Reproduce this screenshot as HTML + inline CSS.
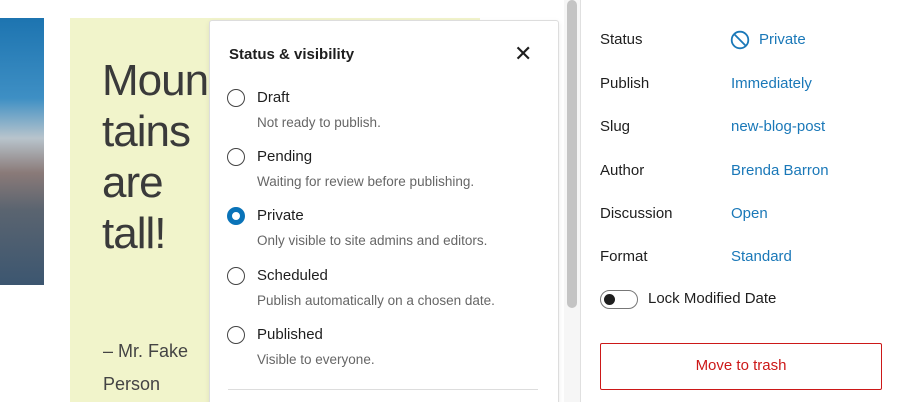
<!DOCTYPE html>
<html><head><style>
html,body{margin:0;width:900px;height:402px;overflow:hidden}
body{background:#fff;font-family:"Liberation Sans",sans-serif;position:relative}
.abs{position:absolute}
.img{left:0;top:18px;width:44px;height:267px;background:linear-gradient(180deg,#1d74b0 0%,#3e8fc4 30%,#b8c4cc 45%,#8a7a78 58%,#5a6470 72%,#3c5670 100%)}
.yel{left:70px;top:18px;width:410px;height:384px;background:#f1f4cb}
.big{left:102px;top:55px;font-size:44px;line-height:51px;color:#3a3a3a;letter-spacing:-1px}
.q{left:103px;font-size:18px;color:#444}
.pop{left:209px;top:20px;width:348px;height:390px;background:#fff;border:1px solid #ddd;border-radius:3px;box-shadow:0 2px 6px rgba(0,0,0,.08)}
.t{left:19px;top:25px;font-size:15px;font-weight:bold;color:#1e1e1e}
.x{left:304px;top:20px;font-size:22px;color:#1e1e1e}
.r{left:17px;width:18px;height:18px;border:1.5px solid #444;border-radius:50%;box-sizing:border-box}
.r.on{border:5.5px solid #0a73b8}
.l{left:47px;font-size:15px;color:#1e1e1e}
.d{left:47px;font-size:13.5px;color:#666}
.sep{left:18px;top:368px;width:310px;height:1px;background:#ddd}
.sb{left:567px;top:0;width:10px;height:308px;background:#c4c4c4;border-radius:5px}
.sbt{left:564px;top:0;width:16px;height:402px;background:#f6f6f6}
.bd{left:580px;top:0;width:1px;height:402px;background:#e0e0e0}
.k{left:600px;font-size:15px;color:#1e1e1e}
.v{left:731px;font-size:15px;color:#1a78b8}
.tg{left:600px;top:290px;width:38px;height:19px;border:1px solid #777;border-radius:10px;box-sizing:border-box}
.tg:after{content:"";position:absolute;left:3px;top:3px;width:11px;height:11px;border-radius:50%;background:#1e1e1e}
.btn{left:600px;top:343px;width:282px;height:47px;border:1.5px solid #cc1818;box-sizing:border-box;border-radius:2px;color:#cc1818;font-size:15px;text-align:center;line-height:44px}
</style></head><body>
<div class="abs img"></div>
<div class="abs yel"></div>
<div class="abs big">Moun<br>tains<br>are<br>tall!</div>
<div class="abs q" style="top:341px">– Mr. Fake</div>
<div class="abs q" style="top:374px">Person</div>
<div class="abs sbt"></div><div class="abs sb"></div><div class="abs bd"></div>
<div class="abs pop">
<div class="abs t">Status &amp; visibility</div>
<div class="abs x">✕</div>
<div class="abs r" style="top:68px"></div><div class="abs l" style="top:68px">Draft</div><div class="abs d" style="top:94px">Not ready to publish.</div>
<div class="abs r" style="top:127px"></div><div class="abs l" style="top:127px">Pending</div><div class="abs d" style="top:153px">Waiting for review before publishing.</div>
<div class="abs r on" style="top:186px"></div><div class="abs l" style="top:186px">Private</div><div class="abs d" style="top:212px">Only visible to site admins and editors.</div>
<div class="abs r" style="top:246px"></div><div class="abs l" style="top:246px">Scheduled</div><div class="abs d" style="top:272px">Publish automatically on a chosen date.</div>
<div class="abs r" style="top:305px"></div><div class="abs l" style="top:305px">Published</div><div class="abs d" style="top:331px">Visible to everyone.</div>
<div class="abs sep"></div>
</div>
<div class="abs k" style="top:31px">Status</div>
<svg class="abs" style="left:730px;top:30px" width="20" height="20" viewBox="0 0 20 20"><circle cx="10" cy="10" r="8.3" fill="none" stroke="#1a78b8" stroke-width="1.8"/><line x1="4.3" y1="4.3" x2="15.7" y2="15.7" stroke="#1a78b8" stroke-width="1.8"/></svg>
<div class="abs v" style="top:31px;left:759px">Private</div>
<div class="abs k" style="top:75px">Publish</div><div class="abs v" style="top:75px">Immediately</div>
<div class="abs k" style="top:118px">Slug</div><div class="abs v" style="top:118px">new-blog-post</div>
<div class="abs k" style="top:162px">Author</div><div class="abs v" style="top:162px">Brenda Barron</div>
<div class="abs k" style="top:205px">Discussion</div><div class="abs v" style="top:205px">Open</div>
<div class="abs k" style="top:248px">Format</div><div class="abs v" style="top:248px">Standard</div>
<div class="abs tg"></div><div class="abs k" style="top:290px;left:648px">Lock Modified Date</div>
<div class="abs btn">Move to trash</div>
</body></html>
